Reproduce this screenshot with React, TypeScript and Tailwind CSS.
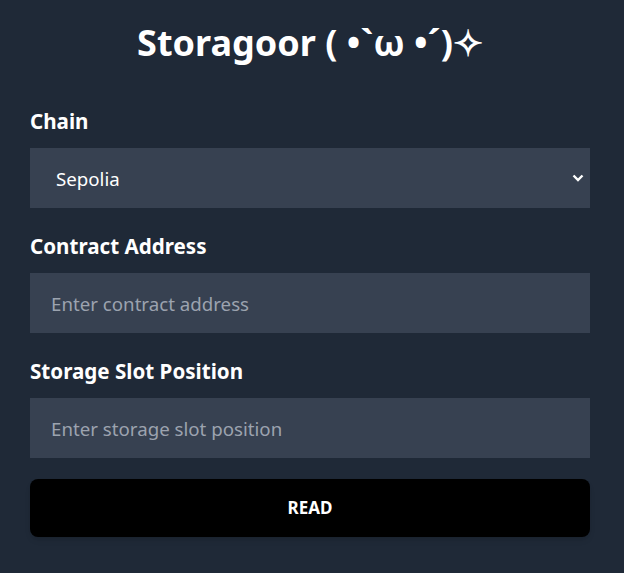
import React from "react";

export default function App() {
  return (
    <div
      className="min-h-[573px] w-full bg-[#1f2937] text-white"
      style={{ fontFamily: '"Noto Sans", "Open Sans", sans-serif' }}
    >
      <div className="flex w-[560px] flex-col pt-[23px] ml-[30px]">
        <h1 className="text-center text-[36px] font-bold leading-[40px]">
          Storagoor ( •`ω •´)✧
        </h1>
        <div className="mt-[44px] flex flex-col">
          <label className="mb-[13px] text-[20.6px] font-bold leading-[28px]">Chain</label>
          <div className="relative">
            <select className="h-[60px] w-full appearance-none bg-[#374151] pl-[26px] pt-[2px] text-[18.7px] text-white outline-none">
              <option>Sepolia</option>
            </select>
            <svg
              className="pointer-events-none absolute right-[6px] top-[24px]"
              width="12"
              height="12"
              viewBox="0 0 12 12"
              fill="none"
              stroke="white"
              strokeWidth="2.4"
            >
              <path d="M1.5 3.5L6 8l4.5-4.5" />
            </svg>
          </div>
        </div>
        <div className="mt-[24px] flex flex-col">
          <label className="mb-[13px] text-[20.6px] font-bold leading-[28px]">Contract Address</label>
          <input
            className="h-[60px] w-full bg-[#374151] px-[21px] text-[18.7px] text-white outline-none placeholder:text-[#9ca3af]"
            placeholder="Enter contract address"
          />
        </div>
        <div className="mt-[24px] flex flex-col">
          <label className="mb-[13px] text-[20.6px] font-bold leading-[28px]">Storage Slot Position</label>
          <input
            className="h-[60px] w-full bg-[#374151] px-[21px] text-[18.7px] text-white outline-none placeholder:text-[#9ca3af]"
            placeholder="Enter storage slot position"
          />
        </div>
        <button className="mt-[21px] h-[58px] w-full rounded-lg bg-black text-[17px] font-bold text-white shadow-md">
          READ
        </button>
      </div>
    </div>
  );
}
